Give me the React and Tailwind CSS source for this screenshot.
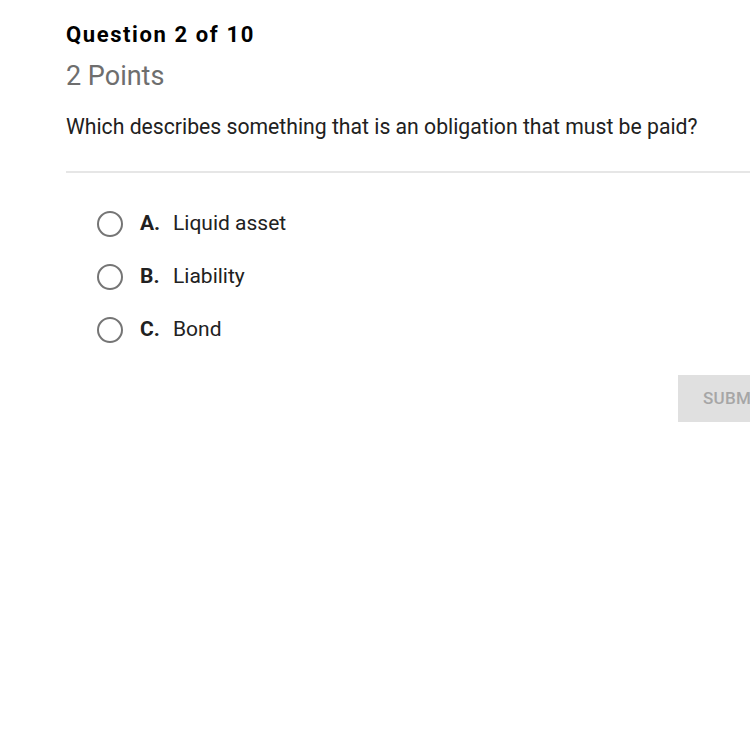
const options = [
  { letter: "A.", text: "Liquid asset" },
  { letter: "B.", text: "Liability" },
  { letter: "C.", text: "Bond" },
];

export default function App() {
  return (
    <div
      className="w-[750px] h-[750px] overflow-hidden bg-white"
      style={{ fontFamily: "Roboto, 'Liberation Sans', sans-serif" }}
    >
      <div className="w-[860px] pl-[66px] pt-[21px]">
        <h1 className="text-[22px] leading-[28px] font-bold text-black tracking-[1.6px]">
          Question 2 of 10
        </h1>
        <p className="mt-[11px] text-[27px] leading-[32px] text-[#6e6e6e]">2 Points</p>
        <p className="mt-[22px] text-[21.2px] leading-[26px] text-[#212121]">
          Which describes something that is an obligation that must be paid?
        </p>
        <div className="mt-[31px] border-t-2 border-[#e6e6e6]" />
        <div className="mt-[38px] flex flex-col gap-[27px] pl-[31px]">
          {options.map((o) => (
            <div key={o.letter} className="flex items-center h-[26px]">
              <span className="w-[26px] h-[26px] rounded-full border-2 border-[#757575]" />
              <span className="ml-[17px] w-[33px] text-[21px] font-bold text-[#212121]">
                {o.letter}
              </span>
              <span className="text-[21px] text-[#212121]">{o.text}</span>
            </div>
          ))}
        </div>
        <div className="mt-[32px] pl-[612px]">
          <button className="h-[47px] w-[140px] bg-[#e0e0e0] text-left pl-[25px] text-[17px] font-medium text-[#a6a6a6] tracking-[0.3px]">
            SUBMIT
          </button>
        </div>
      </div>
    </div>
  );
}
